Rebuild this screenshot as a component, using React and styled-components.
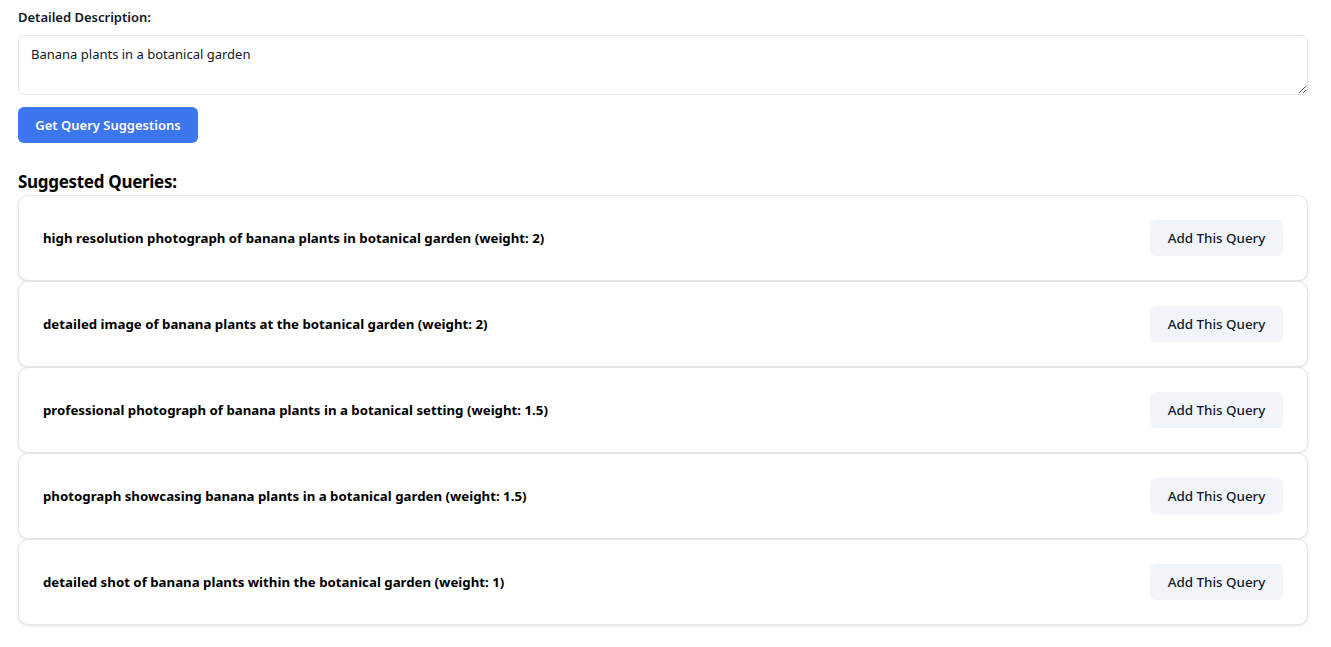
import React, { useState } from 'react';
import styled, { createGlobalStyle } from 'styled-components';

const GlobalStyle = createGlobalStyle`
  body {
    margin: 0;
    background: #ffffff;
    font-family: "Noto Sans", "Open Sans", sans-serif;
    color: #111827;
  }
  * { box-sizing: border-box; }
`;

const Page = styled.div`
  padding: 8px 23px 20px 18px;
`;

const Label = styled.label`
  display: block;
  font-size: 13px;
  font-weight: 600;
  color: #111827;
  margin-bottom: 9px;
`;

const TextArea = styled.textarea`
  display: block;
  width: 100%;
  height: 60px;
  padding: 9px 12px;
  border: 1px solid #e2e8f0;
  border-radius: 6px;
  font-family: inherit;
  font-size: 13px;
  color: #111827;
  resize: vertical;
  outline: none;
`;

const PrimaryButton = styled.button`
  margin-top: 12px;
  height: 36px;
  width: 180px;
  border: none;
  border-radius: 6px;
  background: #3b76ef;
  color: #ffffff;
  font-family: inherit;
  font-size: 13px;
  font-weight: 600;
  cursor: pointer;
`;

const Heading = styled.h3`
  margin: 27px 0 2px;
  font-size: 17px;
  font-weight: 700;
  color: #000;
  letter-spacing: -0.3px;
`;

const List = styled.div`
  display: flex;
  flex-direction: column;
`;

const Card = styled.div`
  display: flex;
  align-items: center;
  justify-content: space-between;
  padding: 24px;
  border: 1px solid #e5e7eb;
  border-radius: 10px;
  background: #fff;
  box-shadow: 0 1px 3px rgba(15, 23, 42, 0.12);
`;

const QueryText = styled.span`
  font-size: 13.25px;
  font-weight: 700;
  color: #000;
`;

const SecondaryButton = styled.button`
  height: 36px;
  width: 133px;
  border: none;
  border-radius: 6px;
  background: #f1f5f9;
  color: #0f172a;
  font-family: inherit;
  font-size: 13.4px;
  font-weight: 500;
  cursor: pointer;
`;

const queries = [
  'high resolution photograph of banana plants in botanical garden (weight: 2)',
  'detailed image of banana plants at the botanical garden (weight: 2)',
  'professional photograph of banana plants in a botanical setting (weight: 1.5)',
  'photograph showcasing banana plants in a botanical garden (weight: 1.5)',
  'detailed shot of banana plants within the botanical garden (weight: 1)',
];

export default function App() {
  const [desc, setDesc] = useState('Banana plants in a botanical garden');
  return (
    <Page>
      <GlobalStyle />
      <Label>Detailed Description:</Label>
      <TextArea value={desc} onChange={(e) => setDesc(e.target.value)} />
      <PrimaryButton>Get Query Suggestions</PrimaryButton>
      <Heading>Suggested Queries:</Heading>
      <List>
        {queries.map((q) => (
          <Card key={q}>
            <QueryText>{q}</QueryText>
            <SecondaryButton>Add This Query</SecondaryButton>
          </Card>
        ))}
      </List>
    </Page>
  );
}
